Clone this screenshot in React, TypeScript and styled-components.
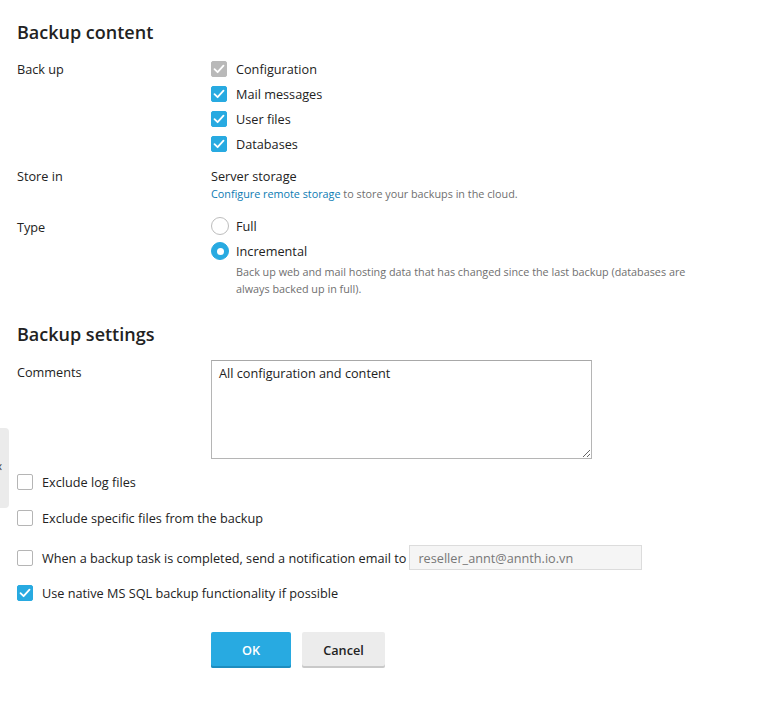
import React from "react";
import styled, { createGlobalStyle } from "styled-components";

const Global = createGlobalStyle`
  html, body { margin: 0; padding: 0; background: #fff; }
  body { font-family: "Open Sans", "Liberation Sans", sans-serif; color: #222; font-size: 12.7px; }
  * { box-sizing: border-box; }
`;

const Page = styled.div`
  position: relative;
  padding: 19px 0 40px 17px;
  width: 775px;
  min-height: 721px;
`;

const SideTab = styled.div`
  position: absolute;
  left: 0;
  top: 428px;
  width: 9px;
  height: 80px;
  background: #ebebeb;
  border-radius: 0 4px 4px 0;
  overflow: hidden;
  &::after {
    content: "‹";
    position: absolute;
    left: -2px;
    top: 28px;
    font-size: 14px;
    color: #444;
  }
`;

const Heading = styled.h2<{ $mt?: number }>`
  margin: ${(p) => p.$mt ?? 0}px 0 0;
  font-size: 18px;
  font-weight: 600;
  line-height: 26px;
  color: #222;
`;

const Row = styled.div<{ $mt?: number }>`
  display: grid;
  grid-template-columns: 194px 1fr;
  margin-top: ${(p) => p.$mt ?? 0}px;
`;

const Label = styled.div<{ $pt?: number }>`
  font-size: 12.7px;
  line-height: 18px;
  padding-top: ${(p) => p.$pt ?? 0}px;
`;

const Field = styled.div`
  display: flex;
  flex-direction: column;
`;

const OptionList = styled.div<{ $gap: number; $mt?: number }>`
  display: flex;
  flex-direction: column;
  gap: ${(p) => p.$gap}px;
  margin-top: ${(p) => p.$mt ?? 0}px;
`;

const Option = styled.label<{ $gap?: number }>`
  display: flex;
  align-items: center;
  gap: ${(p) => p.$gap ?? 9}px;
  font-size: 12.7px;
  line-height: 18px;
  white-space: nowrap;
`;

const Box = styled.span<{ $checked?: boolean; $disabled?: boolean }>`
  flex: none;
  width: 16px;
  height: 16px;
  border-radius: 2px;
  display: inline-flex;
  align-items: center;
  justify-content: center;
  background: ${(p) => (p.$checked ? (p.$disabled ? "#b9b9b9" : "#28aae1") : "#fff")};
  border: 1px solid ${(p) => (p.$checked ? (p.$disabled ? "#b9b9b9" : "#28aae1") : "#b5b5b5")};
`;

const Radio = styled.span<{ $checked?: boolean }>`
  flex: none;
  width: 18px;
  height: 18px;
  border-radius: 50%;
  border: 1px solid ${(p) => (p.$checked ? "#28aae1" : "#bdbdbd")};
  background: ${(p) => (p.$checked ? "#28aae1" : "#fff")};
  display: inline-flex;
  align-items: center;
  justify-content: center;
  &::after {
    content: "";
    display: ${(p) => (p.$checked ? "block" : "none")};
    width: 7px;
    height: 7px;
    border-radius: 50%;
    background: #fff;
  }
`;

const Text = styled.div`
  font-size: 12.7px;
  line-height: 18px;
`;

const Hint = styled.div<{ $indent?: number; $mt?: number }>`
  font-size: 10.8px;
  line-height: 17px;
  color: #6f6f6f;
  padding-left: ${(p) => p.$indent ?? 0}px;
  margin-top: ${(p) => p.$mt ?? 0}px;
  max-width: 490px;
`;

const Link = styled.a`
  color: #0c7bb3;
  text-decoration: none;
`;

const TextArea = styled.textarea`
  width: 381px;
  height: 99px;
  border: 1px solid #b5b5b5;
  border-top-color: #a8a8a8;
  padding: 3px 7px;
  font-family: "Open Sans", "Liberation Sans", sans-serif;
  font-size: 12.7px;
  line-height: 18px;
  color: #222;
  resize: both;
  outline: none;
  display: block;
`;

const CheckLine = styled.label<{ $mt: number }>`
  display: flex;
  align-items: center;
  gap: 9px;
  font-size: 12.7px;
  line-height: 18px;
  margin-top: ${(p) => p.$mt}px;
  white-space: nowrap;
`;

const EmailInput = styled.input`
  width: 233px;
  height: 25px;
  border: 1px solid #dcdcdc;
  background: #f5f5f5;
  padding: 0 8px;
  font-family: "Open Sans", "Liberation Sans", sans-serif;
  font-size: 12.7px;
  color: #777;
  margin-left: -6px;
  outline: none;
`;

const Buttons = styled.div`
  display: flex;
  gap: 11px;
  margin-top: 30px;
  padding-left: 194px;
`;

const Button = styled.button<{ $primary?: boolean }>`
  height: 36px;
  min-width: ${(p) => (p.$primary ? 80 : 83)}px;
  padding: 0 18px;
  border: none;
  border-radius: 2px;
  font-family: "Open Sans", "Liberation Sans", sans-serif;
  font-size: 12.7px;
  font-weight: 600;
  color: ${(p) => (p.$primary ? "#fff" : "#222")};
  background: ${(p) => (p.$primary ? "#28aae1" : "#ececec")};
  box-shadow: inset 0 -2px 0 ${(p) => (p.$primary ? "#1d8dbf" : "#c9c9c9")};
  cursor: pointer;
`;

const Check = () => (
  <svg width="12" height="10" viewBox="0 0 12 10" fill="none">
    <path d="M1.5 5.2 L4.6 8.2 L10.5 1.6" stroke="#fff" strokeWidth="1.8" strokeLinecap="round" strokeLinejoin="round" />
  </svg>
);

const CheckBox = ({ checked, disabled }: { checked?: boolean; disabled?: boolean }) => (
  <Box $checked={checked} $disabled={disabled}>{checked && <Check />}</Box>
);

export default function App() {
  return (
    <>
      <Global />
      <Page>
        <SideTab />
        <Heading>Backup content</Heading>
        <Row $mt={15}>
          <Label>Back up</Label>
          <OptionList $gap={7}>
            <Option><CheckBox checked disabled />Configuration</Option>
            <Option><CheckBox checked />Mail messages</Option>
            <Option><CheckBox checked />User files</Option>
            <Option><CheckBox checked />Databases</Option>
          </OptionList>
        </Row>
        <Row $mt={14}>
          <Label>Store in</Label>
          <Field>
            <Text>Server storage</Text>
            <Hint><Link href="#">Configure remote storage</Link> to store your backups in the cloud.</Hint>
          </Field>
        </Row>
        <Row $mt={16}>
          <Label>Type</Label>
          <Field>
            <OptionList $gap={7} $mt={-1}>
              <Option $gap={7}><Radio />Full</Option>
              <Option $gap={7}><Radio $checked />Incremental</Option>
            </OptionList>
            <Hint $indent={25} $mt={3}>
              Back up web and mail hosting data that has changed since the last backup (databases are always backed up in full).
            </Hint>
          </Field>
        </Row>
        <Heading $mt={24}>Backup settings</Heading>
        <Row $mt={13}>
          <Label $pt={3}>Comments</Label>
          <div>
            <TextArea defaultValue="All configuration and content" />
          </div>
        </Row>
        <CheckLine $mt={14}><CheckBox />Exclude log files</CheckLine>
        <CheckLine $mt={18}><CheckBox />Exclude specific files from the backup</CheckLine>
        <CheckLine $mt={18}>
          <CheckBox />When a backup task is completed, send a notification email to
          <EmailInput defaultValue="reseller_annt@annth.io.vn" />
        </CheckLine>
        <CheckLine $mt={14}><CheckBox checked />Use native MS SQL backup functionality if possible</CheckLine>
        <Buttons>
          <Button $primary>OK</Button>
          <Button>Cancel</Button>
        </Buttons>
      </Page>
    </>
  );
}
